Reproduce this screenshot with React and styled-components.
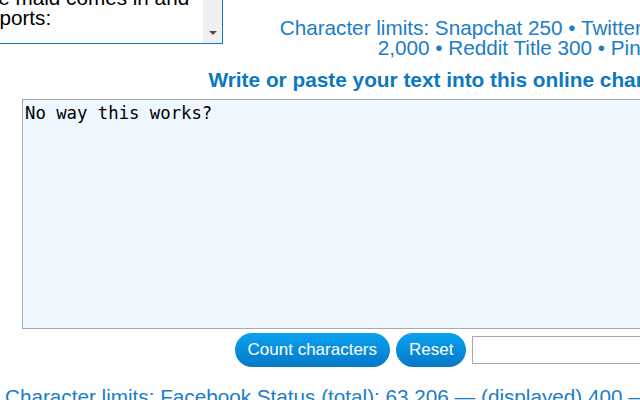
import React from "react";
import styled, { createGlobalStyle } from "styled-components";

const GlobalStyle = createGlobalStyle`
  html, body {
    margin: 0;
    padding: 0;
    overflow: hidden;
    background: #ffffff;
    font-family: "Liberation Sans", Arial, sans-serif;
  }
`;

const Page = styled.div`
  width: 1024px;
  margin: -17px 0 0 -20px;
`;

const TopRow = styled.div`
  display: flex;
  align-items: flex-start;
`;

const SelectBox = styled.div`
  display: flex;
  width: 241px;
  height: 59px;
  border: 1px solid #0a7fd0;
  box-sizing: content-box;
  flex-shrink: 0;
`;

const SelectText = styled.div`
  flex: 1;
  padding: 4px 0 0 0;
  font-size: 20.7px;
  line-height: 20px;
  color: #000;
  white-space: nowrap;
  overflow: hidden;
`;

const ScrollStrip = styled.div`
  width: 19px;
  background: #f0f0f0;
  display: flex;
  align-items: flex-end;
  justify-content: center;
  padding-bottom: 8px;
`;

const Arrow = styled.div`
  width: 0;
  height: 0;
  border-left: 4px solid transparent;
  border-right: 4px solid transparent;
  border-top: 4px solid #505050;
`;

const Limits = styled.p`
  flex: 1;
  margin: 0;
  padding-top: 35px;
  text-align: center;
  font-size: 20.7px;
  line-height: 20px;
  color: #1a7dc8;
`;

const Heading = styled.h2`
  margin: 10px 0 0;
  text-align: center;
  font-size: 20.8px;
  line-height: 24px;
  font-weight: bold;
  color: #0c78c2;
`;

const TextBox = styled.textarea`
  display: block;
  box-sizing: border-box;
  width: 960px;
  height: 230px;
  margin: 7px 0 0 42px;
  padding: 2px 2px;
  border: 1px solid #a9a9a9;
  background: #edf7fd;
  font-family: "DejaVu Sans Mono", monospace;
  font-size: 17.3px;
  line-height: 22px;
  color: #000;
  resize: none;
  outline: none;
`;

const ButtonRow = styled.div`
  display: flex;
  justify-content: center;
  align-items: center;
  gap: 6px;
  margin-top: 4px;
`;

const Pill = styled.button`
  height: 34px;
  padding: 0 ${(p) => p.$pad}px;
  border: none;
  border-radius: 17px;
  background: linear-gradient(#0aa2f0, #0578c8);
  color: #ffffff;
  font-family: "Liberation Sans", Arial, sans-serif;
  font-size: 17px;
  cursor: pointer;
`;

const Result = styled.input`
  width: 277px;
  height: 28px;
  box-sizing: border-box;
  border: 1px solid #a9a9a9;
  background: #fff;
`;

const Footer = styled.p`
  margin: 19px 0 0;
  padding-left: 25px;
  font-size: 20.7px;
  line-height: 22px;
  color: #1a7dc8;
  white-space: nowrap;
`;

export default function App() {
  return (
    <>
      <GlobalStyle />
      <Page>
        <TopRow>
          <SelectBox>
            <SelectText>
              the maid comes in and
              <br />
              reports:
            </SelectText>
            <ScrollStrip>
              <Arrow />
            </ScrollStrip>
          </SelectBox>
          <Limits>
            Character limits: Snapchat 250 • Twitter 280 • Instagram 2,200 • LinkedIn
            <br />
            2,000 • Reddit Title 300 • Pinterest 500 • Quora 250
          </Limits>
        </TopRow>
        <Heading>Write or paste your text into this online character counter</Heading>
        <TextBox defaultValue="No way this works?" />
        <ButtonRow>
          <Pill $pad={13}>Count characters</Pill>
          <Pill $pad={13}>Reset</Pill>
          <Result type="text" />
        </ButtonRow>
        <Footer>
          Character limits: Facebook Status (total): 63,206 — (displayed) 400 — Facebook Comment 8,000
        </Footer>
      </Page>
    </>
  );
}
